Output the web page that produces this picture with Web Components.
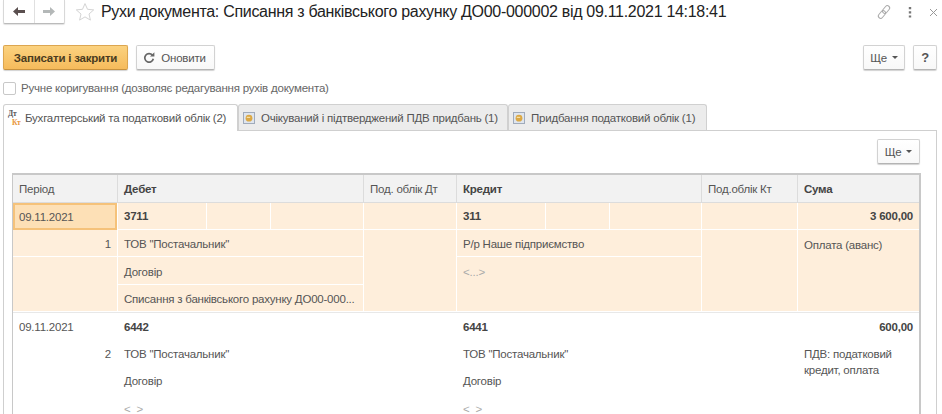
<!DOCTYPE html>
<html>
<head>
<meta charset="utf-8">
<style>
  html, body { margin: 0; height: 414px; overflow: hidden; background: #fff; }
  body { font-family: "Liberation Sans", Arial, sans-serif; color: #4b4b4b; letter-spacing: -.22px; }
</style>
</head>
<body>
<doc-movements></doc-movements>

<script>
const ICONS = {
  back: `<svg width="14" height="11" viewBox="0 0 14 11"><path d="M1 5.5L6 1v3h7v3H6v3z" fill="#5a4f4f"/></svg>`,
  forward: `<svg width="14" height="11" viewBox="0 0 14 11"><path d="M13 5.5L8 1v3H1v3h7v3z" fill="#b4b8b8"/></svg>`,
  star: `<svg width="20" height="20" viewBox="0 0 20 20"><path d="M10 1.6l2.5 5.7 6.2.6-4.7 4.1 1.4 6.1L10 14.9l-5.4 3.2L6 12 1.3 7.9l6.2-.6z" fill="#fff" stroke="#d4d4d4" stroke-width="1"/></svg>`,
  link: `<svg width="16" height="16" viewBox="0 0 16 16" fill="none" stroke="#aaa" stroke-width="1"><g transform="rotate(-50 8 8)"><rect x="0.5" y="5.7" width="8.5" height="4.6" rx="2.3"/><rect x="7" y="5.7" width="8.5" height="4.6" rx="2.3"/></g></svg>`,
  dots: `<svg width="4" height="11" viewBox="0 0 4 11"><path d="M.8 0h2.4v2.2H.8zM.8 4.2h2.4v2.2H.8zM.8 8.4h2.4v2.2H.8z" fill="#777"/></svg>`,
  close: `<svg width="9" height="9" viewBox="0 0 9 9"><path d="M1 1l7 7M8 1L1 8" stroke="#999" stroke-width="1" fill="none"/></svg>`,
  refresh: `<svg width="12" height="12" viewBox="0 0 12 12" fill="none"><path d="M9.4 3.1A4.3 4.3 0 1 0 10.3 6.8" stroke="#666" stroke-width="1.7"/><path d="M7 4.6h4.4V.2z" fill="#666"/></svg>`,
  dtkt: `<svg width="14" height="18" viewBox="0 0 14 18"><text x="1" y="7" font-family="Liberation Serif" font-weight="bold" font-size="7.5" fill="#555">Дт</text><text x="5" y="16" font-family="Liberation Serif" font-weight="bold" font-size="7.5" fill="#e8953a">Кт</text></svg>`,
  reg: `<svg width="12" height="12" viewBox="0 0 12 12"><rect x=".5" y=".5" width="11" height="11" fill="#dfe5ee" stroke="#a0abbb"/><circle cx="6" cy="6.2" r="3.4" fill="#dba845"/><path d="M3.8 5.4h3.4" stroke="#f5dfa6" stroke-width="1.2"/></svg>`
};

class UiButton extends HTMLElement {
  constructor() {
    super();
    this.attachShadow({ mode: 'open' });
    this.shadowRoot.innerHTML = `
    <style>
      :host {
        display: inline-flex;
        align-items: center;
        justify-content: center;
        box-sizing: border-box;
        height: 25px;
        gap: 6px;
        font-size: 11.5px;
        color: #555;
        white-space: nowrap;
        background: linear-gradient(#fff, #f8f8f8);
        border: 1px solid #d2d2d2;
        border-bottom-color: #b4b4b4;
        border-radius: 2px;
        box-shadow: 0 1px 1px rgba(0,0,0,.18);
      }
      :host([primary]) {
        font-weight: bold;
        color: #4a3b20;
        background: linear-gradient(#fbd27f, #f6bb5c);
        border-color: #dca650;
        border-bottom-color: #c8923e;
      }
      ::slotted(svg) { flex: none; }
    </style>
    <slot></slot>`;
  }
}
customElements.define('ui-button', UiButton);

class UiTab extends HTMLElement {
  constructor() {
    super();
    this.attachShadow({ mode: 'open' });
    this.shadowRoot.innerHTML = `
    <style>
      :host {
        display: flex;
        align-items: center;
        box-sizing: border-box;
        height: 26px;
        gap: 6px;
        padding: 0 0 0 4px;
        font-size: 11.5px;
        color: #555;
        white-space: nowrap;
        background: #ececec;
        border: 1px solid #d0d0d0;
        border-bottom: 0;
        border-radius: 3px 3px 0 0;
      }
      :host([active]) {
        background: #fff;
        height: 27px;
        margin-bottom: -1px;
        position: relative;
        z-index: 1;
        gap: 4px;
        padding-left: 3px;
      }
      ::slotted(svg) { flex: none; }
    </style>
    <slot></slot>`;
  }
}
customElements.define('ui-tab', UiTab);

class GridCell extends HTMLElement {
  constructor() {
    super();
    this.attachShadow({ mode: 'open' });
    this.shadowRoot.innerHTML = `
    <style>
      :host {
        display: block;
        box-sizing: border-box;
        padding: 0 6px;
        font-size: 11.5px;
        line-height: 14px;
        color: #555;
        overflow: hidden;
        white-space: nowrap;
      }
      :host([b]) { font-weight: bold; color: #444; }
      :host([r]) { text-align: right; }
      :host([wrap]) { white-space: normal; line-height: 16px; }
    </style>
    <slot></slot>`;
  }
}
customElements.define('grid-cell', GridCell);

class DocHeader extends HTMLElement {
  constructor() {
    super();
    this.attachShadow({ mode: 'open' });
    this.shadowRoot.innerHTML = `
    <style>
      :host { display: flex; align-items: flex-start; height: 45px; box-sizing: border-box; padding-left: 3px; }
      .nav {
        display: flex; flex: none; width: 62px; height: 24px; box-sizing: border-box;
        background: #fff; border: 1px solid #d8d8d8; border-top: 0;
        border-bottom-color: #bbb; border-radius: 0 0 2px 2px;
        box-shadow: 0 1px 1px rgba(0,0,0,.12);
      }
      .nav span { flex: 1; display: flex; align-items: center; justify-content: center; }
      .nav span + span { border-left: 1px solid #e0e0e0; }
      .star { margin: 2px 0 0 10px; height: 20px; }
      h1 {
        margin: 2px 0 0 6px;
        font-size: 16px;
        line-height: 20px;
        letter-spacing: -.3px;
        font-weight: normal;
        color: #222;
        white-space: nowrap;
      }
      .tools { margin: 4px 0 0 auto; display: flex; align-items: center; }
      .tools span { display: flex; align-items: center; justify-content: center; height: 16px; }
    </style>
    <div class="nav"><span>${ICONS.back}</span><span>${ICONS.forward}</span></div>
    <div class="star">${ICONS.star}</div>
    <h1>Рухи документа: Списання з банківського рахунку ДО00-000002 від 09.11.2021 14:18:41</h1>
    <div class="tools">
      <span style="width:16px;margin-right:16px">${ICONS.link}</span>
      <span style="width:4px;margin-right:17px">${ICONS.dots}</span>
      <span style="width:9px;margin-right:4px">${ICONS.close}</span>
    </div>`;
  }
}
customElements.define('doc-header', DocHeader);

class DocToolbar extends HTMLElement {
  constructor() {
    super();
    this.attachShadow({ mode: 'open' });
    this.shadowRoot.innerHTML = `
    <style>
      :host { display: flex; height: 25px; padding: 0 5px 0 3px; gap: 8px; }
      .sp { flex: 1; }
      ui-button.save { width: 125px; }
      ui-button.ref { width: 79px; padding-right: 2px; }
      ui-button.more { width: 42px; gap: 5px; }
      ui-button.q { width: 24px; font-weight: bold; font-size: 13px; }
      i { width: 0; height: 0; border: 3px solid transparent; border-top-color: #555; border-bottom: 0; }
    </style>
    <ui-button class="save" primary>Записати і закрити</ui-button>
    <ui-button class="ref">${ICONS.refresh}Оновити</ui-button>
    <div class="sp"></div>
    <ui-button class="more">Ще<i></i></ui-button>
    <ui-button class="q">?</ui-button>`;
  }
}
customElements.define('doc-toolbar', DocToolbar);

class DocCheck extends HTMLElement {
  constructor() {
    super();
    this.attachShadow({ mode: 'open' });
    this.shadowRoot.innerHTML = `
    <style>
      :host { display: flex; align-items: center; height: 14px; margin: 11px 0 9px 3px; gap: 5px; font-size: 11.5px; color: #666; }
      b { display: block; box-sizing: border-box; width: 13px; height: 13px; background: #fff; border: 1px solid #c8c8c8; border-radius: 2px; }
    </style>
    <b></b><slot></slot>`;
  }
}
customElements.define('doc-check', DocCheck);

class DocTabs extends HTMLElement {
  constructor() {
    super();
    this.attachShadow({ mode: 'open' });
    this.shadowRoot.innerHTML = `
    <style>
      :host { display: flex; align-items: flex-end; height: 26px; padding-left: 3px; }
      ui-tab { flex: none; }
      ui-tab:nth-of-type(1) { width: 235px; }
      ui-tab:nth-of-type(2) { width: 270px; }
      ui-tab:nth-of-type(3) { width: 199px; }
    </style>
    <ui-tab active>${ICONS.dtkt}Бухгалтерський та податковий облік (2)</ui-tab>
    <ui-tab>${ICONS.reg}Очікуваний і підтверджений ПДВ придбань (1)</ui-tab>
    <ui-tab>${ICONS.reg}Придбання податковий облік (1)</ui-tab>`;
  }
}
customElements.define('doc-tabs', DocTabs);

class DocGrid extends HTMLElement {
  constructor() {
    super();
    this.attachShadow({ mode: 'open' });
    this.shadowRoot.innerHTML = `
    <style>
      :host {
        display: block;
        box-sizing: border-box;
        width: 909px;
        height: 241px;
        flex: none;
        overflow: hidden;
        border: 1px solid #c8c8c8;
        border-bottom: 0;
        border-width: 2px 2px 0 1px;
      }
      .g { display: grid; grid-template-columns: 104px 246px 93px 245px 96px 1fr; }
      .head { height: 28px; background: #f2f2f2; border-bottom: 1px solid #dcdcdc; box-sizing: border-box; }
      .head > * { display: flex; align-items: center; border-left: 1px solid #dcdcdc; }
      .head > :first-child { border-left: 0; }
      .rec { grid-template-rows: 27px 27px 28px 27px; }
      .rec > grid-cell { display: flex; align-items: center; border-left: 1px solid transparent; }
      .rec > grid-cell:first-child, .rec > .nosep { border-left: 0; }
      .sel { background: #feeedb; height: 110px; box-sizing: border-box; border-bottom: 1px solid #e8e8e8; }
      .sel > grid-cell { border-left-color: #fff; border-bottom: 1px solid #fff; }
      .sel > grid-cell:nth-child(n+7):not(.top) { padding-top: 2px; }
      .rec > grid-cell.current { background: #fde0b6; border: 2px solid #f5c27a; padding-left: 4px; }
      .rec > .top { align-items: flex-start; padding-top: 8px; }
      .plain > .top { padding-top: 6px; }
      .split { display: grid !important; grid-template-columns: 88px 64px 1fr; padding: 0; }
      .split span { display: flex; align-items: center; height: 100%; padding: 0 6px; box-sizing: border-box; border-left: 1px solid #fff; }
      .split span:first-child { border-left: 0; }
      .dim { color: #aaa; }
      .num { justify-content: flex-end; }
    </style>
    <div class="g head">
      <grid-cell>Період</grid-cell>
      <grid-cell b>Дебет</grid-cell>
      <grid-cell>Под. облік Дт</grid-cell>
      <grid-cell b>Кредит</grid-cell>
      <grid-cell>Под.облік Кт</grid-cell>
      <grid-cell b>Сума</grid-cell>
    </div>
    <div class="g rec sel">
      <grid-cell class="current">09.11.2021</grid-cell>
      <grid-cell b class="split"><span>3711</span><span></span><span></span></grid-cell>
      <grid-cell></grid-cell>
      <grid-cell b class="split"><span>311</span><span></span><span></span></grid-cell>
      <grid-cell></grid-cell>
      <grid-cell b r class="num">3 600,00</grid-cell>

      <grid-cell r class="num nosep">1</grid-cell>
      <grid-cell>ТОВ "Постачальник"</grid-cell>
      <grid-cell style="grid-row: span 3"></grid-cell>
      <grid-cell>Р/р Наше підприємство</grid-cell>
      <grid-cell style="grid-row: span 3"></grid-cell>
      <grid-cell class="top" style="grid-row: span 3">Оплата (аванс)</grid-cell>

      <grid-cell class="nosep" style="grid-row: span 2"></grid-cell>
      <grid-cell>Договір</grid-cell>
      <grid-cell class="dim top" style="grid-row: span 2">&lt;...&gt;</grid-cell>
      <grid-cell>Списання з банківського рахунку ДО00-000...</grid-cell>
    </div>
    <div class="g rec plain">
      <grid-cell>09.11.2021</grid-cell>
      <grid-cell b>6442</grid-cell>
      <grid-cell></grid-cell>
      <grid-cell b>6441</grid-cell>
      <grid-cell></grid-cell>
      <grid-cell b r class="num">600,00</grid-cell>

      <grid-cell r class="num">2</grid-cell>
      <grid-cell>ТОВ "Постачальник"</grid-cell>
      <grid-cell></grid-cell>
      <grid-cell>ТОВ "Постачальник"</grid-cell>
      <grid-cell></grid-cell>
      <grid-cell wrap class="top" style="grid-row: span 2">ПДВ: податковий кредит, оплата</grid-cell>

      <grid-cell></grid-cell>
      <grid-cell>Договір</grid-cell>
      <grid-cell></grid-cell>
      <grid-cell>Договір</grid-cell>
      <grid-cell></grid-cell>

      <grid-cell></grid-cell>
      <grid-cell class="dim">&lt;&nbsp;&nbsp;&gt;</grid-cell>
      <grid-cell></grid-cell>
      <grid-cell class="dim">&lt;&nbsp;&nbsp;&gt;</grid-cell>
    </div>`;
  }
}
customElements.define('doc-grid', DocGrid);

class DocPanel extends HTMLElement {
  constructor() {
    super();
    this.attachShadow({ mode: 'open' });
    this.shadowRoot.innerHTML = `
    <style>
      :host {
        display: flex;
        flex-direction: column;
        align-items: flex-end;
        box-sizing: border-box;
        width: 934px;
        height: 284px;
        margin-left: 3px;
        padding: 8px 15px 0 8px;
        border: 1px solid #cfcfcf;
        border-bottom: 0;
      }
      ui-button { width: 43px; gap: 5px; margin: 0 1px 9px 0; flex: none; }
      i { width: 0; height: 0; border: 3px solid transparent; border-top-color: #555; border-bottom: 0; }
    </style>
    <ui-button>Ще<i></i></ui-button>
    <doc-grid></doc-grid>`;
  }
}
customElements.define('doc-panel', DocPanel);

class DocMovements extends HTMLElement {
  constructor() {
    super();
    this.attachShadow({ mode: 'open' });
    this.shadowRoot.innerHTML = `
    <style>
      :host { display: block; width: 942px; height: 414px; overflow: hidden; }
    </style>
    <doc-header></doc-header>
    <doc-toolbar></doc-toolbar>
    <doc-check>Ручне коригування (дозволяє редагування рухів документа)</doc-check>
    <doc-tabs></doc-tabs>
    <doc-panel></doc-panel>`;
  }
}
customElements.define('doc-movements', DocMovements);
</script>
</body>
</html>
